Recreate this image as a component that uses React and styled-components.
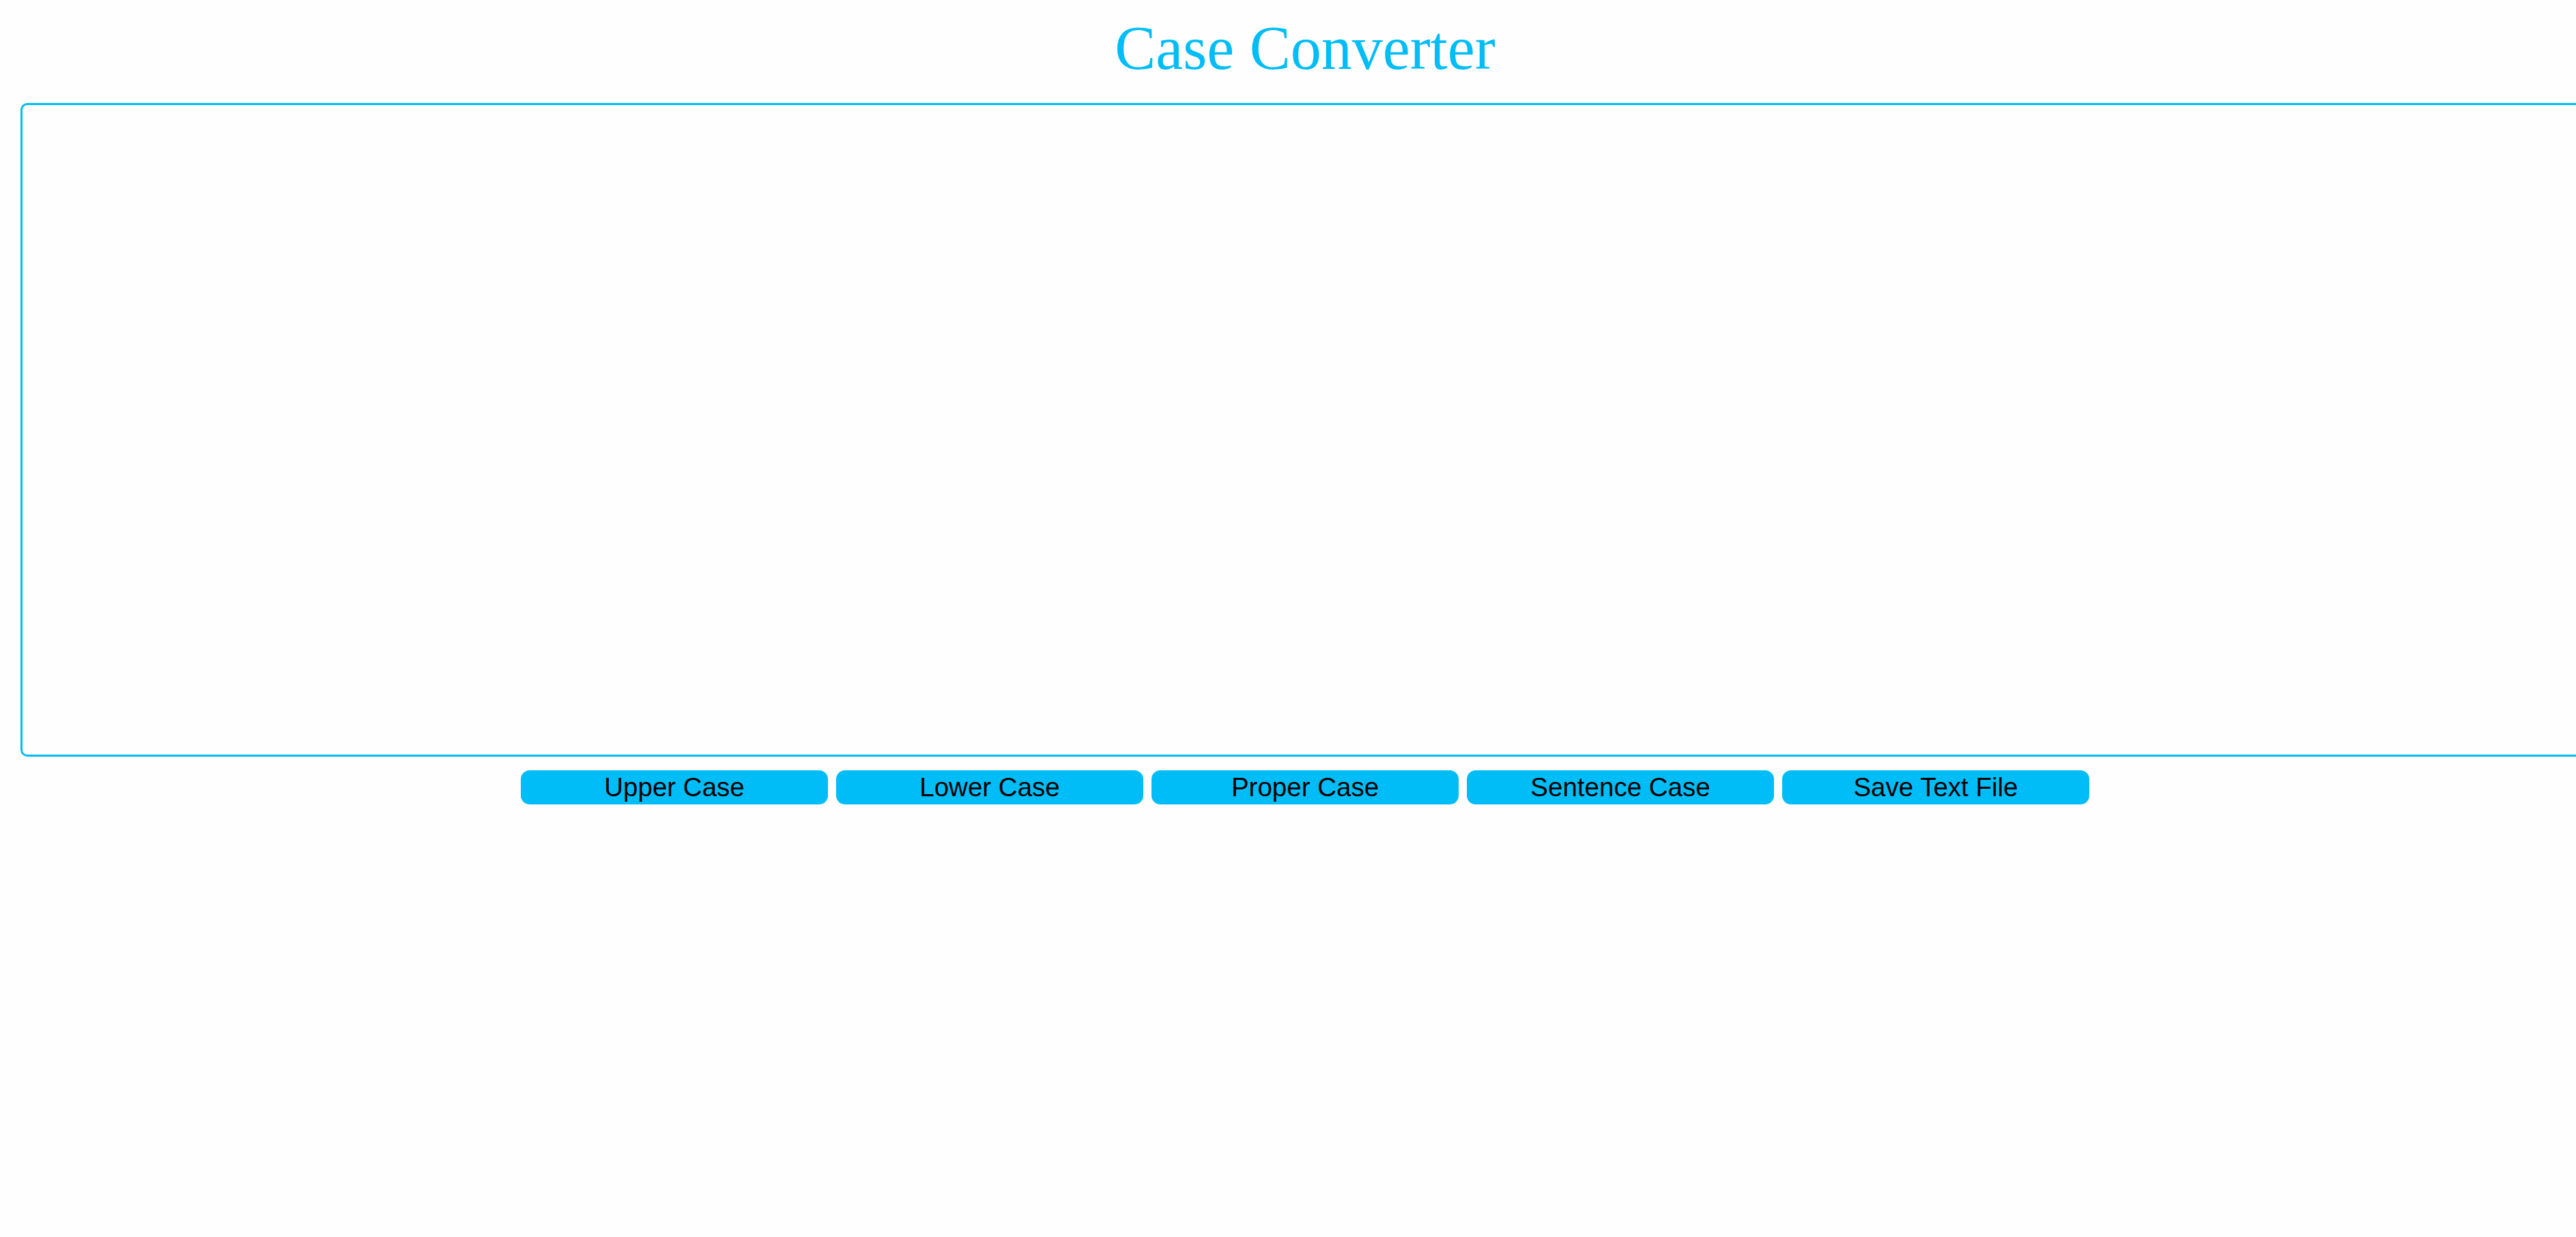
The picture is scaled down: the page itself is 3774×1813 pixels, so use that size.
import React, { Component } from "react";
import styled, { createGlobalStyle } from "styled-components";

const GlobalStyle = createGlobalStyle`
  html,
  body {
    margin: 0;
    padding: 0;
    background: #fefefe;
    overflow-x: hidden;
  }
`;

const Wrapper = styled.div`
  width: 3764px;
  margin-left: 30px;
  padding-top: 21px;
  display: flex;
  flex-direction: column;
  align-items: center;
`;

const Title = styled.h1`
  margin: 0;
  font-family: "Liberation Serif", "Times New Roman", serif;
  font-weight: normal;
  font-size: 90px;
  line-height: 100px;
  color: #00bdf7;
`;

const TextBox = styled.textarea`
  box-sizing: border-box;
  align-self: flex-start;
  width: 3756px;
  height: 958px;
  margin-top: 30px;
  border: 3px solid #00bdf7;
  border-radius: 10px;
  outline: none;
  padding: 10px;
  font-family: "Liberation Sans", Arial, sans-serif;
  font-size: 38px;
  background: #fefefe;
`;

const ButtonRow = styled.div`
  display: flex;
  gap: 12px;
  margin-top: 20px;
`;

const Button = styled.button`
  width: 450px;
  height: 50px;
  padding: 0;
  border: none;
  border-radius: 13px;
  background: #00bdf7;
  color: #000;
  font-family: "Liberation Sans", Arial, sans-serif;
  font-size: 38.5px;
  line-height: 48px;
  cursor: pointer;
`;

export default class App extends Component {
  constructor(props) {
    super(props);

    this.state = {
      text: "",
    };
  }
  render() {
    return (
      <>
        <GlobalStyle />
        <Wrapper>
          <Title>Case Converter</Title>
          <TextBox
            value={this.state.text}
            onChange={(e) => this.setState({ text: e.target.value })}
          />
          <ButtonRow>
            <Button>Upper Case</Button>
            <Button>Lower Case</Button>
            <Button>Proper Case</Button>
            <Button>Sentence Case</Button>
            <Button>Save Text File</Button>
          </ButtonRow>
        </Wrapper>
      </>
    );
  }
}
